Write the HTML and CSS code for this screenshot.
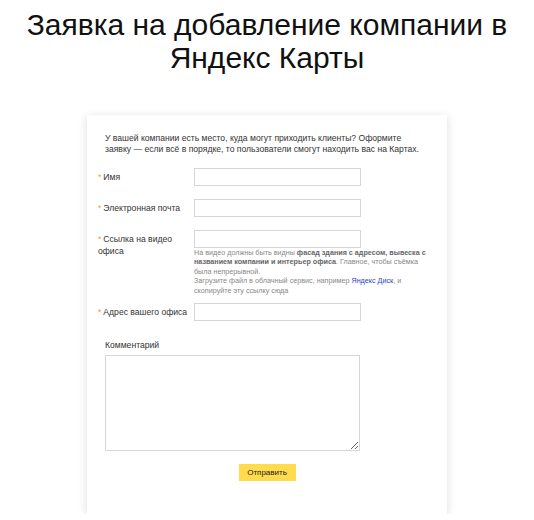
FILE: index.html
```html
<!DOCTYPE html>
<html lang="ru">
<head>
    <meta charset="UTF-8">
    <meta name="viewport" content="width=device-width, initial-scale=1.0">
    <title>Заявка на добавление компании в Яндекс Карты</title>
    <link rel="stylesheet" href="styles.css">
</head>
<body>
    <h1 class="page-title">Заявка на добавление компании в Яндекс Карты</h1>

    <form class="card">
        <p class="intro">У вашей компании есть место, куда могут приходить клиенты? Оформите заявку — если всё в порядке, то пользователи смогут находить вас на Картах.</p>

        <div class="row">
            <label class="label required" for="name">Имя</label>
            <div class="field"><input id="name" class="input" type="text"></div>
        </div>

        <div class="row">
            <label class="label required" for="email">Электронная почта</label>
            <div class="field"><input id="email" class="input" type="email"></div>
        </div>

        <div class="row row-video">
            <label class="label required" for="video">Ссылка на видео офиса</label>
            <div class="field">
                <input id="video" class="input" type="text">
                <p class="hint">На видео должны быть видны <b>фасад здания с адресом, вывеска с названием компании и интерьер офиса</b>. Главное, чтобы съёмка была непрерывной.<br>Загрузите файл в облачный сервис, например <a href="#">Яндекс Диск</a>, и скопируйте эту ссылку сюда</p>
            </div>
        </div>

        <div class="row">
            <label class="label required" for="address">Адрес вашего офиса</label>
            <div class="field"><input id="address" class="input" type="text"></div>
        </div>

        <div class="comment">
            <label class="comment-label" for="comment">Комментарий</label>
            <textarea id="comment" class="textarea"></textarea>
        </div>

        <div class="actions">
            <button type="button" class="btn-submit">Отправить</button>
        </div>
    </form>
</body>
</html>
```

FILE: styles.css
```css
body {
    margin: 0;
    background: #fff;
    font-family: "Liberation Sans", Arial, sans-serif;
    color: #222;
}
.page-title {
    margin: 8px auto 0;
    width: 520px;
    font-size: 30px;
    line-height: 33px;
    font-weight: normal;
    text-align: center;
    color: #111;
}
.card {
    width: 360px;
    margin: 41px auto 0;
    padding: 18px 0 33px;
    background: #fff;
    box-shadow: 0 2px 9px rgba(0,0,0,0.14);
    box-sizing: border-box;
}
.intro {
    margin: 0 18px 13px;
    font-size: 8.6px;
    line-height: 11px;
    color: #333;
}
.row {
    display: flex;
    align-items: flex-start;
    padding-left: 11px;
    margin-bottom: 13px;
}
.row-video {
    margin-bottom: 8px;
}
.label {
    width: 96px;
    padding-top: 3px;
    font-size: 8.6px;
    line-height: 12px;
    color: #333;
    box-sizing: border-box;
}
.required::before {
    content: "*";
    color: #f0a030;
    margin-right: 2px;
}
.field {
    width: 236px;
}
.input {
    display: block;
    width: 167px;
    height: 18px;
    margin: 0;
    padding: 0 4px;
    border: 1px solid #d6d6d6;
    box-sizing: border-box;
    font: inherit;
}
.hint {
    margin: 0;
    font-size: 7.2px;
    line-height: 9.4px;
    color: #888;
}
.hint b {
    font-weight: 600;
    color: #666;
}
.hint a {
    color: #2a3fc4;
    text-decoration: none;
}
.comment {
    padding: 5px 18px 0;
}
.comment-label {
    display: block;
    font-size: 8.6px;
    line-height: 12px;
    color: #333;
    margin-bottom: 4px;
}
.textarea {
    display: block;
    width: 255px;
    height: 96px;
    margin: 0;
    border: 1px solid #d6d6d6;
    box-sizing: border-box;
    resize: vertical;
}
.actions {
    display: flex;
    justify-content: center;
    margin-top: 13px;
}
.btn-submit {
    width: 57px;
    height: 17px;
    padding: 0;
    border: none;
    background: #ffdb4d;
    font-family: inherit;
    font-size: 8px;
    color: #222;
    cursor: pointer;
}
```
